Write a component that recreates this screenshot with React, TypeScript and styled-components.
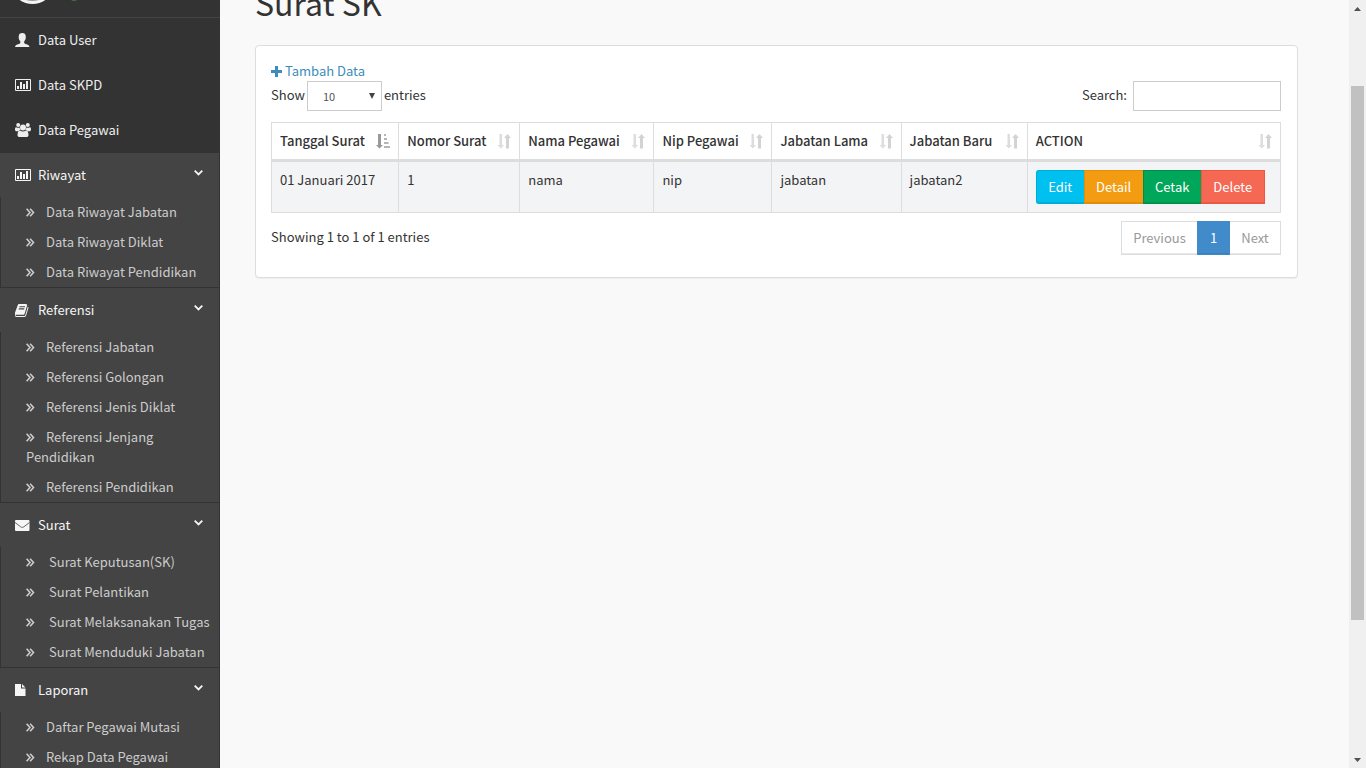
import React from "react";
import styled, { createGlobalStyle } from "styled-components";

const GlobalStyle = createGlobalStyle`
  *, *::before, *::after { box-sizing: border-box; }
  body {
    margin: 0;
    background: #f9f9f9;
    color: #333;
    font-family: "Source Sans Pro", "Noto Sans CJK SC", "Noto Sans", sans-serif;
    font-size: 13px;
    line-height: 20px;
  }
  button, input, select { font: inherit; }
`;

const Page = styled.div`
  display: flex;
  height: 100vh;
  overflow: hidden;
`;

/* Sidebar */

const Sidebar = styled.aside`
  flex: 0 0 220px;
  background: #333;
  overflow: hidden;
`;

const Profile = styled.div`
  display: flex;
  align-items: flex-end;
  gap: 14px;
  height: 17px;
  padding: 0 10px 13px;
`;

const Avatar = styled.div`
  width: 45px;
  height: 45px;
  border: 3px solid #f4f4f4;
  border-radius: 50%;
  background: #999;
`;

const OnlineDot = styled.span`
  width: 10px;
  height: 10px;
  margin-bottom: 3px;
  border-radius: 50%;
  background: #3c763d;
`;

const Menu = styled.ul`
  list-style: none;
  margin: 0;
  padding: 0;
`;

const PlainItem = styled.li<{ $first?: boolean }>`
  border-top: 1px solid ${(p) => (p.$first ? "#444" : "#333")};
`;

const GroupItem = styled.li`
  background: #444;
  border-bottom: 1px solid #333;
  border-right: 1px solid #333;

  ${PlainItem} + & { border-top: 1px solid #333; }
`;

const MenuLink = styled.a<{ $bright?: boolean }>`
  display: flex;
  align-items: center;
  height: 44px;
  padding: 0 16px 0 15px;
  color: ${(p) => (p.$bright ? "#f6f6f6" : "#eee")};
  text-decoration: none;

  svg { flex: none; }
  > svg:last-child { margin-bottom: 5px; }
`;

const IconSlot = styled.span`
  display: flex;
  flex: 0 0 23px;
  align-items: center;
`;

const MenuText = styled.span`
  flex: 1;
`;

const SubMenu = styled.ul`
  list-style: none;
  margin: 0;
  padding: 0;
  border-left: 1px solid #333;
`;

const SubLink = styled.a<{ $wide?: boolean }>`
  display: block;
  padding: 5px 4px 5px 25px;
  color: #ccc;
  text-decoration: none;

  svg {
    margin-right: ${(p) => (p.$wide ? "14px" : "11px")};
  }
`;

/* Content */

const Main = styled.main`
  flex: 1;
  min-width: 0;
  padding: 0 51px 0 35px;
`;

const TitleBar = styled.header`
  display: flex;
  align-items: flex-end;
  height: 22px;
  margin-bottom: 23px;
`;

const Title = styled.h1`
  margin: 0;
  font-size: 32px;
  font-weight: 400;
  line-height: 40px;
`;

const Card = styled.section`
  padding: 15px 16px 22px 15px;
  background: #fff;
  border: 1px solid #ddd;
  border-radius: 4px;
  box-shadow: 0 1px 1px rgba(0, 0, 0, 0.05);
`;

const AddLink = styled.a`
  display: flex;
  align-items: center;
  gap: 3px;
  width: max-content;
  color: #3c8dbc;
  text-decoration: none;
`;

const Controls = styled.div`
  display: flex;
  justify-content: space-between;
  margin-bottom: 11px;
`;

const Control = styled.label<{ $gap: number }>`
  display: flex;
  align-items: flex-start;
  gap: ${(p) => p.$gap}px;
  line-height: 28px;
`;

const SelectBox = styled.span`
  display: flex;
  align-items: center;
  width: 75px;
  height: 30px;
  padding-right: 6px;
  border: 1px solid #ccc;
  background: #fff;
`;

const Select = styled.select`
  flex: 1;
  min-width: 0;
  height: 28px;
  padding: 0 0 0 15px;
  border: 0;
  appearance: none;
  background: transparent;
  color: #555;
  font-size: 11px;
`;

const SearchInput = styled.input`
  width: 148px;
  height: 30px;
  padding: 5px 10px;
  border: 1px solid #ccc;
  background: #fff;
`;

const Table = styled.table`
  width: 100%;
  table-layout: fixed;
  border-collapse: separate;
  border-spacing: 0;
  border-right: 1px solid #ddd;
  text-align: left;
`;

const Col = styled.col<{ $share?: number }>`
  width: ${(p) => (p.$share ? `${p.$share}%` : "auto")};
`;

const HeadCell = styled.th`
  padding: 8px;
  border: solid #ddd;
  border-width: 1px 0 3px 1px;
  font-weight: 500;
`;

const HeadLabel = styled.div`
  display: flex;
  align-items: center;
  justify-content: space-between;
  white-space: nowrap;
`;

const Cell = styled.td`
  padding: 8px;
  border: solid #ddd;
  border-width: 0 0 1px 1px;
  background: #f3f4f5;
  vertical-align: top;
`;

const ButtonGroup = styled.div`
  display: flex;
`;

const ActionButton = styled.button<{ $bg: string; $edge: string; $width: number }>`
  width: ${(p) => p.$width}px;
  height: 34px;
  padding: 0;
  border: 1px solid ${(p) => p.$edge};
  border-right-width: 0;
  background: ${(p) => p.$bg};
  box-shadow: inset 0 -1px 0 rgba(0, 0, 0, 0.09);
  color: #fff;

  &:first-child { border-radius: 3px 0 0 3px; }
  &:last-child { border-right-width: 1px; }
`;

const Footer = styled.div`
  display: flex;
  justify-content: space-between;
  padding-top: 8px;
`;

const Info = styled.div`
  padding-top: 6px;
`;

const Pager = styled.nav`
  display: flex;
`;

const PageButton = styled.button<{ $active?: boolean; $width: number }>`
  width: ${(p) => p.$width}px;
  height: 34px;
  padding: 0;
  border: 1px solid ${(p) => (p.$active ? "#428bca" : "#ddd")};
  background: ${(p) => (p.$active ? "#428bca" : "#fff")};
  box-shadow: inset 0 -1px 0 rgba(0, 0, 0, 0.09);
  color: ${(p) => (p.$active ? "#fff" : "#999")};

  &:first-child { border-right: 0; }
  &:last-child { border-left: 0; }
`;

/* Scroll track */

const Track = styled.div`
  display: flex;
  flex: 0 0 17px;
  flex-direction: column;
  align-items: center;
  background: #f0f0f0;
`;

const TrackEnd = styled.div`
  display: flex;
  flex: 0 0 17px;
  align-items: center;
`;

const TrackSpace = styled.div<{ $share: number }>`
  flex: ${(p) => p.$share} 0 0;
`;

const Thumb = styled.div`
  flex: 534 0 0;
  width: 13px;
  background: #c1c1c1;
`;

/* Icons */

const UserIcon = () => (
  <svg width="15" height="15" viewBox="0 0 15 15" fill="currentColor" aria-hidden="true">
    <path d="M7.250 0C4.700 0 3.700 1.500 3.700 3.900c0 2 .6 3.500 1.600 4.400v1.500c0 .5-.5.800-1.500 1.200C1.800 11.700.1 12.300 0 14h14.500c-.1-1.700-1.800-2.300-3.800-3-1-.4-1.500-.7-1.500-1.200V8.300c1-.9 1.600-2.400 1.600-4.400C10.800 1.500 9.800 0 7.250 0z" />
  </svg>
);

const ChartIcon = () => (
  <svg width="16" height="12" viewBox="0 0 16 12" fill="currentColor" aria-hidden="true">
    <path fillRule="evenodd" d="M1 0h14a1 1 0 0 1 1 1v10a1 1 0 0 1-1 1H1a1 1 0 0 1-1-1V1a1 1 0 0 1 1-1zm0 1v10h14V1zM2 7h2v3H2zM5 3h2v7H5zM8 5h2v5H8zM11 2h2v8h-2z" />
  </svg>
);

const UsersIcon = () => (
  <svg width="16" height="14" viewBox="0 0 16 14" fill="currentColor" aria-hidden="true">
    <circle cx="3.200" cy="2" r="2" />
    <circle cx="12.800" cy="2" r="2" />
    <circle cx="8" cy="4.500" r="3" />
    <path d="M1.200 4.200c1 .6 2.300.7 3.400.3.100 1 .5 1.900 1.100 2.500-1 .1-1.700.5-2.200 1.200H1.600C.6 8.200 0 7.600 0 6.700c0-1.500.3-2.800 1.200-2.500zM14.800 4.200c-1 .6-2.300.7-3.400.3-.1 1-.5 1.900-1.100 2.500 1 .1 1.700.5 2.200 1.200h1.900c1 0 1.600-.6 1.600-1.500 0-1.500-.3-2.800-1.200-2.500z" />
    <path d="M5 7.500c1.900 1.300 4.100 1.300 6 0 1.700 0 2.500 1.900 2.500 4.400 0 1.300-.9 2.100-2.100 2.100H4.600c-1.200 0-2.100-.8-2.100-2.100 0-2.500.8-4.400 2.500-4.400z" />
  </svg>
);

const BookIcon = () => (
  <svg width="14" height="13" viewBox="64 128 1664 1536" fill="currentColor" aria-hidden="true">
    <path d="M1639 478q40 57 18 129l-275 906q-19 64-76.500 107.500t-122.500 43.500h-923q-77 0-148.500-53.500t-99.500-131.500q-24-67-2-127 0-4 3-27t4-37q1-8-3-21.500t-3-19.500q2-11 8-21t16.500-23.500 16.500-23.500q23-38 45-91.500t30-91.500q3-10 .5-30t-.5-28q3-11 17-28t17-23q21-36 42-92t25-90q1-9-2.500-32t.5-28q4-13 22-30.500t22-22.500q19-26 42.500-84.500t27.500-96.500q1-8-3-25.500t-2-26.500q2-8 9-18t18-23 17-21q8-12 16.500-30.500t15-35 16-36 19.500-32 26.500-23.500 36-11.500 47.500 5.500l-1 3q38-9 51-9h761q74 0 114 56t18 130l-274 906q-36 119-71.500 153.500t-128.500 34.500h-869q-27 0-38 15-11 16-1 43 24 70 144 70h923q29 0 56-15.500t35-41.500l300-987q7-22 5-57 38 15 59 43zm-1064 2q-4 13 2 22.500t20 9.500h608q13 0 25.500-9.500t16.500-22.500l21-64q4-13-2-22.500t-20-9.500h-608q-13 0-25.500 9.500t-16.500 22.500zm-83 256q-4 13 2 22.500t20 9.500h608q13 0 25.500-9.500t16.500-22.500l21-64q4-13-2-22.500t-20-9.500h-608q-13 0-25.500 9.500t-16.500 22.500z" />
  </svg>
);

const MailIcon = () => (
  <svg width="15" height="11" viewBox="0 0 15 11" aria-hidden="true">
    <rect width="14.500" height="11" rx="1" fill="currentColor" />
    <path d="M0 2.500l5.500 4.200c1.200.9 2.300.9 3.500 0l5.500-4.200" fill="none" stroke="#666" />
  </svg>
);

const FileIcon = () => (
  <svg width="11" height="12" viewBox="0 0 11 12" fill="currentColor" aria-hidden="true">
    <path d="M0 0h6v4.500h4.500V12H0zM7 0l3.500 3.500H7z" />
  </svg>
);

const DoubleArrow = () => (
  <svg width="9" height="9" viewBox="0 0 9 9" fill="none" stroke="currentColor" strokeWidth="1.600" aria-hidden="true">
    <path d="M.6.700l3.400 3.800L.6 8.300M4.100.700l3.400 3.800-3.400 3.800" />
  </svg>
);

const AngleDown = () => (
  <svg width="9" height="6" viewBox="0 0 9 6" fill="none" stroke="currentColor" strokeWidth="1.800" aria-hidden="true">
    <path d="M.7.700l3.800 3.800L8.300.7" />
  </svg>
);

const PlusIcon = () => (
  <svg width="11" height="11" viewBox="0 0 11 11" fill="currentColor" aria-hidden="true">
    <path d="M4 0h3v4h4v3H7v4H4V7H0V4h4z" />
  </svg>
);

const SortBoth = () => (
  <svg width="14" height="15" viewBox="0 0 14 15" aria-hidden="true">
    <path d="M2.500 0h2.500v11h2L3.800 14.500.5 11h2z" fill="#ddd" />
    <path d="M9 14.500h3V4h2l-3.500-4L7 4h2z" fill="#d3d3d3" />
  </svg>
);

const SortAsc = () => (
  <svg width="14" height="15" viewBox="0 0 14 15" aria-hidden="true">
    <path d="M2 0h3v11h2L3.500 14.500 0 11h2z" fill="#999" />
    <path d="M8 0h2v2H8zM8 4h3v2H8zM8 8h4.500v2H8zM8 12h6v2H8z" fill="#b5b5b5" />
  </svg>
);

const SelectArrow = () => (
  <svg width="6" height="6" viewBox="0 0 6 6" fill="#444" aria-hidden="true">
    <path d="M0 0h6L3 6z" />
  </svg>
);

const TrackArrow = ({ down }: { down?: boolean }) => (
  <svg width="7" height="4" viewBox="0 0 7 4" fill="#505050" aria-hidden="true">
    <path d={down ? "M0 0h7L3.500 4z" : "M0 4h7L3.500 0z"} />
  </svg>
);

/* Data */

const links = [
  { text: "Data User", Icon: UserIcon },
  { text: "Data SKPD", Icon: ChartIcon },
  { text: "Data Pegawai", Icon: UsersIcon },
];

const groups = [
  {
    text: "Riwayat",
    Icon: ChartIcon,
    items: ["Data Riwayat Jabatan", "Data Riwayat Diklat", "Data Riwayat Pendidikan"],
  },
  {
    text: "Referensi",
    Icon: BookIcon,
    items: [
      "Referensi Jabatan",
      "Referensi Golongan",
      "Referensi Jenis Diklat",
      "Referensi Jenjang Pendidikan",
      "Referensi Pendidikan",
    ],
  },
  {
    text: "Surat",
    Icon: MailIcon,
    wide: true,
    items: ["Surat Keputusan(SK)", "Surat Pelantikan", "Surat Melaksanakan Tugas", "Surat Menduduki Jabatan"],
  },
  {
    text: "Laporan",
    Icon: FileIcon,
    items: ["Daftar Pegawai Mutasi", "Rekap Data Pegawai"],
  },
];

const columns = [
  { label: "Tanggal Surat", value: "01 Januari 2017", share: 12.6 },
  { label: "Nomor Surat", value: "1", share: 12 },
  { label: "Nama Pegawai", value: "nama", share: 13.3 },
  { label: "Nip Pegawai", value: "nip", share: 11.7 },
  { label: "Jabatan Lama", value: "jabatan", share: 12.8 },
  { label: "Jabatan Baru", value: "jabatan2", share: 12.5 },
];

const actions = [
  { text: "Edit", bg: "#00c0ef", edge: "#00acd6", width: 48 },
  { text: "Detail", bg: "#f39c12", edge: "#e08e0b", width: 59 },
  { text: "Cetak", bg: "#00a65a", edge: "#008d4c", width: 58 },
  { text: "Delete", bg: "#f56954", edge: "#f4543c", width: 64 },
];

export default function App() {
  return (
    <Page>
      <GlobalStyle />
      <Sidebar>
        <Profile>
          <Avatar />
          <OnlineDot />
        </Profile>
        <Menu>
          {links.map(({ text, Icon }, i) => (
            <PlainItem key={text} $first={i === 0}>
              <MenuLink href="#">
                <IconSlot><Icon /></IconSlot>
                <MenuText>{text}</MenuText>
              </MenuLink>
            </PlainItem>
          ))}
          {groups.map(({ text, Icon, items, wide }) => (
            <GroupItem key={text}>
              <MenuLink href="#" $bright>
                <IconSlot><Icon /></IconSlot>
                <MenuText>{text}</MenuText>
                <AngleDown />
              </MenuLink>
              <SubMenu>
                {items.map((item) => (
                  <li key={item}>
                    <SubLink href="#" $wide={wide}>
                      <DoubleArrow />
                      {item}
                    </SubLink>
                  </li>
                ))}
              </SubMenu>
            </GroupItem>
          ))}
        </Menu>
      </Sidebar>

      <Main>
        <TitleBar>
          <Title>Surat SK</Title>
        </TitleBar>
        <Card>
          <AddLink href="#">
            <PlusIcon />
            Tambah Data
          </AddLink>
          <Controls>
            <Control $gap={2}>
              Show
              <SelectBox>
                <Select defaultValue="10">
                  <option>10</option>
                  <option>25</option>
                  <option>50</option>
                  <option>100</option>
                </Select>
                <SelectArrow />
              </SelectBox>
              entries
            </Control>
            <Control $gap={6}>
              Search:
              <SearchInput type="search" />
            </Control>
          </Controls>
          <Table>
            <colgroup>
              {columns.map((c) => (
                <Col key={c.label} $share={c.share} />
              ))}
              <Col />
            </colgroup>
            <thead>
              <tr>
                {columns.map((c, i) => (
                  <HeadCell key={c.label}>
                    <HeadLabel>
                      {c.label}
                      {i === 0 ? <SortAsc /> : <SortBoth />}
                    </HeadLabel>
                  </HeadCell>
                ))}
                <HeadCell>
                  <HeadLabel>
                    ACTION
                    <SortBoth />
                  </HeadLabel>
                </HeadCell>
              </tr>
            </thead>
            <tbody>
              <tr>
                {columns.map((c) => (
                  <Cell key={c.label}>{c.value}</Cell>
                ))}
                <Cell>
                  <ButtonGroup>
                    {actions.map((a) => (
                      <ActionButton key={a.text} type="button" $bg={a.bg} $edge={a.edge} $width={a.width}>
                        {a.text}
                      </ActionButton>
                    ))}
                  </ButtonGroup>
                </Cell>
              </tr>
            </tbody>
          </Table>
          <Footer>
            <Info>Showing 1 to 1 of 1 entries</Info>
            <Pager aria-label="Pagination">
              <PageButton type="button" $width={76}>Previous</PageButton>
              <PageButton type="button" $width={33} $active>1</PageButton>
              <PageButton type="button" $width={51}>Next</PageButton>
            </Pager>
          </Footer>
        </Card>
      </Main>

      <Track aria-hidden="true">
        <TrackEnd><TrackArrow /></TrackEnd>
        <TrackSpace $share={69} />
        <Thumb />
        <TrackSpace $share={131} />
        <TrackEnd><TrackArrow down /></TrackEnd>
      </Track>
    </Page>
  );
}
